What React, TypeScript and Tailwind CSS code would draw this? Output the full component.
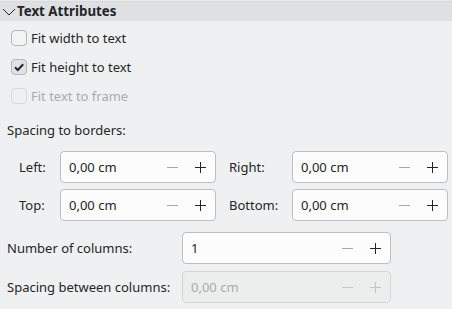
import React from "react";

function Check({ checked, disabled, label }: { checked?: boolean; disabled?: boolean; label: string }) {
  return (
    <div className="flex items-center h-[16px] gap-[4px]">
      <div
        className={
          "w-[16px] h-[16px] rounded-[4px] border flex items-center justify-center " +
          (disabled
            ? "border-[#d6d8da] bg-[#eff0f1]"
            : checked
            ? "border-[#b4b8bc] bg-[#dfe3e7]"
            : "border-[#b4b6b8] bg-[#f2f3f4]")
        }
      >
        {checked && (
          <svg width="12" height="12" viewBox="0 0 12 12">
            <path d="M2 6.2 L4.8 9 L10.2 3.2" fill="none" stroke="#232629" strokeWidth="2" />
          </svg>
        )}
      </div>
      <span className={disabled ? "text-[#a9abad]" : ""}>{label}</span>
    </div>
  );
}

function Spin({ value, width, disabled }: { value: string; width: string; disabled?: boolean }) {
  return (
    <div
      className={
        "h-[32px] rounded-[4px] border flex items-center pl-[8px] " +
        width +
        (disabled ? " border-[#d3d5d7] bg-[#eceded] text-[#a9abad]" : " border-[#bdbfc1] bg-[#fcfcfc]")
      }
    >
      <span className="flex-1">{value}</span>
      <svg width="11" height="11" viewBox="0 0 11 11" className="mr-[17px]">
        <path d="M0 5.5 H11" stroke={disabled ? "#c4c6c8" : "#a7a9ab"} strokeWidth="1" />
      </svg>
      <svg width="11" height="11" viewBox="0 0 11 11" className="mr-[9px]">
        <path d="M0 5.5 H11 M5.5 0 V11" stroke={disabled ? "#bfc1c3" : "#232629"} strokeWidth="1" />
      </svg>
    </div>
  );
}

export default function App() {
  return (
    <div className="w-[452px] h-[309px] overflow-hidden bg-[#eff0f1] text-[13px] leading-none text-[#232629] font-['Noto_Sans',sans-serif]">
      <div className="h-[1px] bg-[#e9eaeb]" />
      <div className="h-[1px] bg-[#d8d9da]" />
      <div className="h-[19px] bg-[#dfe0e2] flex items-center pl-[2px] gap-[1px]">
        <svg width="14" height="8" viewBox="0 0 14 8">
          <path d="M1 1 L7 7 L13 1" fill="none" stroke="#232629" strokeWidth="1" />
        </svg>
        <span className="font-bold text-[13.3px]">Text Attributes</span>
      </div>

      <div className="flex flex-col gap-[13px] pl-[11px] pt-[9px]">
        <Check label="Fit width to text" />
        <Check checked label="Fit height to text" />
        <Check disabled label="Fit text to frame" />
      </div>

      <div className="pl-[7px] pt-[20px]">Spacing to borders:</div>

      <div className="grid grid-cols-[41px_156px_76px_156px] gap-y-[6px] items-center pl-[19px] pt-[14px]">
        <span>Left:</span>
        <Spin value="0,00 cm" width="w-[156px]" />
        <span className="pl-[13px]">Right:</span>
        <Spin value="0,00 cm" width="w-[156px]" />
        <span>Top:</span>
        <Spin value="0,00 cm" width="w-[156px]" />
        <span className="pl-[13px]">Bottom:</span>
        <Spin value="0,00 cm" width="w-[156px]" />
      </div>

      <div className="grid grid-cols-[175px_209px] gap-y-[7px] items-center pl-[7px] pt-[11px]">
        <span>Number of columns:</span>
        <Spin value="1" width="w-[209px]" />
        <span>Spacing between columns:</span>
        <Spin value="0,00 cm" width="w-[209px]" disabled />
      </div>
    </div>
  );
}
